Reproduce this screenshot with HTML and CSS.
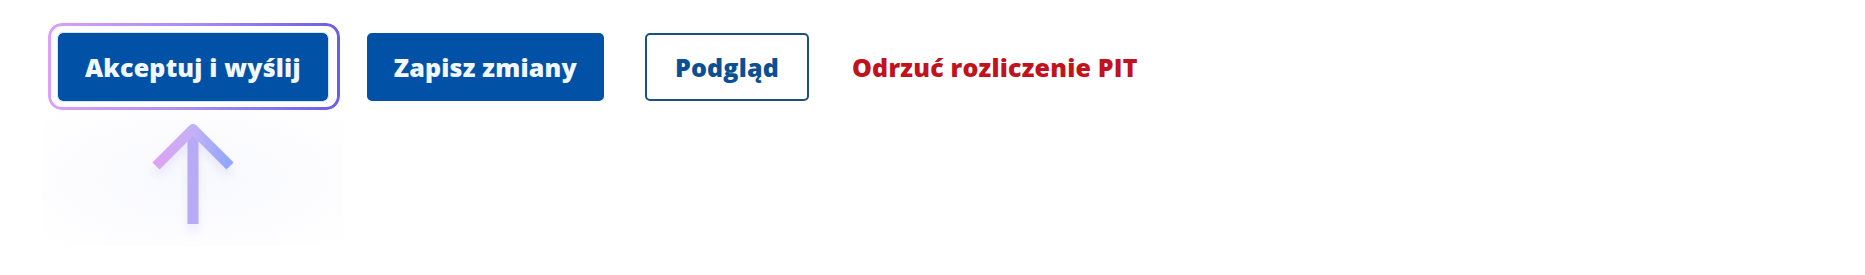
FILE: index.html
```html
<!DOCTYPE html>
<html lang="pl">
<head>
<meta charset="utf-8">
<link rel="stylesheet" href="styles.css">
</head>
<body>
<div class="actions">
  <div class="highlight">
    <button class="btn btn-primary">Akceptuj i wyślij</button>
    <div class="hint">
      <svg class="arrow" width="100" height="130" viewBox="0 0 100 130">
        <defs>
          <linearGradient id="ah" x1="0" y1="0" x2="1" y2="0">
            <stop offset="0" stop-color="#dca2f4"/>
            <stop offset="0.5" stop-color="#c2b2f6"/>
            <stop offset="1" stop-color="#8fa6fb"/>
          </linearGradient>
          <filter id="glow" x="-50%" y="-50%" width="200%" height="200%">
            <feGaussianBlur stdDeviation="5"/>
          </filter>
        </defs>
        <g opacity="0.25" filter="url(#glow)" transform="translate(0,7)">
          <path d="M50 14 V112 M13 54 L50 17 L87 54" stroke="#b7aef5" stroke-width="10" fill="none"/>
        </g>
        <path d="M50 16 V112" stroke="#b9aaf6" stroke-width="11" fill="none"/>
        <path d="M13 54 L50 17 L87 54" stroke="url(#ah)" stroke-width="10" fill="none" stroke-linejoin="round"/>
      </svg>
    </div>
  </div>
  <button class="btn btn-primary">Zapisz zmiany</button>
  <button class="btn btn-outline">Podgląd</button>
  <button class="btn btn-link">Odrzuć rozliczenie PIT</button>
</div>
</body>
</html>
```
FILE: styles.css
```css
html, body {
  margin: 0;
  padding: 0;
  background: #ffffff;
}
body {
  width: 1865px;
  height: 275px;
  overflow: hidden;
  font-family: "Open Sans", "Noto Sans", sans-serif;
}
.actions {
  display: flex;
  align-items: center;
  gap: 39px;
  padding: 33px 0 0 58px;
}
.btn {
  font-family: "Open Sans", "Noto Sans", sans-serif;
  font-weight: 800;
  font-size: 25px;
  height: 68px;
  padding: 0 25px;
  border-radius: 5px;
  border: 2px solid transparent;
  cursor: pointer;
  white-space: nowrap;
  box-sizing: border-box;
  letter-spacing: 0.2px;
}
.btn-primary {
  background: #0152a7;
  color: #f3f8ff;
  border-color: #0152a7;
}
.btn-outline {
  background: #ffffff;
  color: #0b4f94;
  border-color: #1d4f86;
  padding: 0 28px;
  margin-left: 2px;
}
.btn-link {
  background: transparent;
  color: #c2121d;
  border: none;
  padding: 0;
  margin-left: 4px;
}
.highlight {
  position: relative;
  display: flex;
}
.highlight::before {
  content: "";
  position: absolute;
  left: -10px;
  top: -10px;
  right: -12px;
  bottom: -9px;
  border-radius: 14px;
  padding: 3px;
  background: linear-gradient(90deg, #dca0f6 0%, #a88cf0 50%, #6a5de6 100%);
  -webkit-mask: linear-gradient(#000 0 0) content-box, linear-gradient(#000 0 0);
  -webkit-mask-composite: xor;
  mask-composite: exclude;
  box-shadow: 0 6px 14px rgba(150, 130, 240, 0.12);
}
.highlight::after {
  content: "";
  position: absolute;
  inset: -1px;
  border-radius: 6px;
  border: 1px solid #cfe4ff;
  pointer-events: none;
}
.hint {
  position: absolute;
  left: 50%;
  margin-left: -150px;
  top: 79px;
  width: 300px;
  height: 134px;
  background: radial-gradient(ellipse at center, rgba(246, 247, 253, 0.8) 0%, rgba(250, 250, 255, 0.5) 60%, rgba(255, 255, 255, 0) 100%);
}
.arrow {
  position: absolute;
  left: 100px;
  top: 0;
}
```
